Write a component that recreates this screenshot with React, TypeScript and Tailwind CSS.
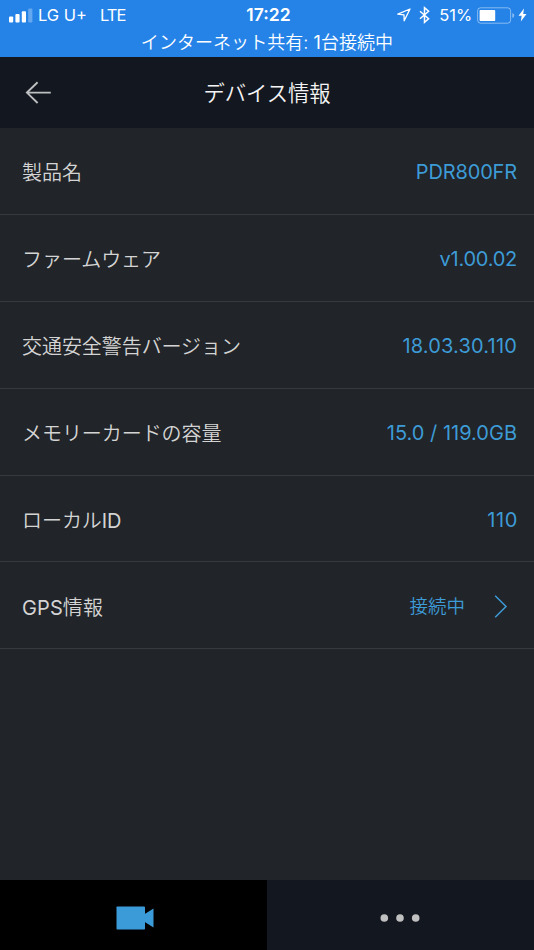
import { ReactNode } from 'react'
import { twMerge } from 'tailwind-merge'

type InfoItem = {
  id: string
  label: ReactNode
  value: string
  labelClass?: string
  valueClass?: string
  hasLink?: boolean
}

const items: InfoItem[] = [
  { id: 'product', label: '製品名', value: 'PDR800FR', valueClass: 'tracking-[-0.15px]' },
  { id: 'firmware', label: 'ファームウェア', value: 'v1.00.02', valueClass: 'tracking-[-0.25px]' },
  { id: 'safety', label: '交通安全警告バージョン', value: '18.03.30.110', valueClass: 'tracking-[0.18px]' },
  { id: 'memory', label: 'メモリーカードの容量', value: '15.0 / 119.0GB' },
  {
    id: 'local',
    label: <>ローカル<span className="font-normal">ID</span></>,
    value: '110',
    valueClass: 'tracking-[0.6px] -mr-px',
  },
  {
    id: 'gps',
    label: <><span className="font-normal">GPS</span>情報</>,
    value: '接続中',
    labelClass: 'tracking-[0.1px]',
    valueClass: 'text-[18.5px] font-[350]',
    hasLink: true,
  },
]

function StatusBar() {
  return (
    <div className="h-[57px] shrink-0 bg-[#2583e8] text-white">
      <div className="grid h-[30px] grid-cols-[1fr_auto_1fr] items-center pl-[9px] pr-[7px] text-[16.5px] leading-[30px]">
        <div className="flex items-center">
          <svg width="24" height="15" viewBox="0 0 24 15" fill="currentColor">
            <rect x="0" y="8.5" width="4.2" height="6" rx="1" />
            <rect x="6.4" y="6" width="4.2" height="8.5" rx="1" />
            <rect x="12.8" y="3.2" width="4.2" height="11.3" rx="1" />
            <rect x="19.2" y="0.5" width="4.2" height="14" rx="1" opacity="0.3" />
          </svg>
          <span className="ml-[5px]">LG U+</span>
          <span className="ml-[13px] tracking-[-1px]">LTE</span>
        </div>
        <span className="pl-px text-[17.5px] font-semibold">17:22</span>
        <div className="flex items-center justify-end">
          <svg width="14" height="14" viewBox="0 0 14 14" fill="none">
            <path
              d="M0.8 6.2 13 1 7.2 12.8 7 6.8Z"
              stroke="currentColor"
              strokeWidth="1.3"
              strokeLinejoin="round"
            />
          </svg>
          <svg className="ml-2" width="11" height="18" viewBox="0 0 11 18" fill="none">
            <path
              d="M1 5.2 9.6 12.7 5.5 16.3V1.7L9.6 5.3 1 12.8"
              stroke="currentColor"
              strokeWidth="1.5"
            />
          </svg>
          <span className="ml-[9px] tracking-[-0.1px]">51%</span>
          <svg className="ml-[5px]" width="38" height="17" viewBox="0 0 38 17" fill="none">
            <rect x="0.6" y="0.8" width="33" height="15.4" rx="3" stroke="currentColor" strokeOpacity="0.45" />
            <rect x="2.6" y="2.9" width="15.6" height="11.2" rx="0.8" fill="currentColor" />
            <path d="M35.3 6c2.6.8 2.6 4.2 0 5Z" fill="currentColor" fillOpacity="0.45" />
          </svg>
          <svg className="ml-[3px]" width="9" height="14" viewBox="0 0 9 14" fill="currentColor">
            <path d="M6 .5.5 7.8h3.2L2.8 13.5 8.5 5.9H5.2Z" />
          </svg>
        </div>
      </div>
      <p className="pt-px text-center text-[18px] font-[350] leading-[24px] tracking-[0.05px]">
        インターネット共有: <span className="font-normal">1</span>台接続中
      </p>
    </div>
  )
}

function Header({ title }: { title: string }) {
  return (
    <header className="grid h-[71px] shrink-0 grid-cols-[1fr_auto_1fr] items-center bg-[#13171f] px-6">
      <svg width="27" height="24" viewBox="0 0 27 24" fill="none">
        <path d="M13.6 1.2 2.9 11.6 13.6 22M2.9 11.6H26.8" stroke="#bdbfc1" strokeWidth="1.9" />
      </svg>
      <h1 className="pt-0.5 text-[21.3px] font-[350] text-[#f4f4f4]">{title}</h1>
    </header>
  )
}

function InfoRow({ item }: { item: InfoItem }) {
  return (
    <li className="flex h-[86.9px] items-center justify-between border-b border-[#36393e] pl-[22px] pr-[17px] pt-[3px]">
      <span
        className={twMerge(
          'pt-0.5 text-[20px] font-[350] tracking-[-0.06px] text-[#d4d4d4]',
          item.labelClass,
        )}
      >
        {item.label}
      </span>
      <span className="flex items-center text-[#3d9bd6]">
        <span className={twMerge('text-[20px]', item.valueClass)}>
          {item.value}
        </span>
        {item.hasLink && (
          <svg className="ml-[29px] mr-[9px]" width="14" height="24" viewBox="0 0 14 24" fill="none">
            <path d="M1.2 0.8 12 11.5 1.2 22.2" stroke="currentColor" strokeWidth="1.5" />
          </svg>
        )}
      </span>
    </li>
  )
}

function Tab({ active, children }: { active?: boolean; children: ReactNode }) {
  return (
    <button
      className={twMerge(
        'flex w-1/2 items-center justify-center bg-[#13171f] pr-px pt-1.5',
        active && 'bg-black pl-0.5 pr-0',
      )}
    >
      {children}
    </button>
  )
}

export default function App() {
  return (
    <div className="flex h-[950px] w-[534px] flex-col overflow-hidden bg-[#212428] font-['Inter','Noto_Sans_CJK_JP',sans-serif]">
      <StatusBar />
      <Header title="デバイス情報" />
      <ul className="flex-1">
        {items.map((item) => (
          <InfoRow key={item.id} item={item} />
        ))}
      </ul>
      <nav className="flex h-[70px] shrink-0">
        <Tab active>
          <svg width="38" height="24" viewBox="0 0 38 24" fill="#3b9bd9">
            <rect x="0.5" y="0.5" width="28.5" height="23" rx="0.8" />
            <path d="M28 8.5 37.5 2.5V21.5L28 15.5Z" />
          </svg>
        </Tab>
        <Tab>
          <svg width="40" height="8" viewBox="0 0 40 8" fill="#c0c0c0">
            <circle cx="4.3" cy="4" r="3.8" />
            <circle cx="20" cy="4" r="3.8" />
            <circle cx="35.7" cy="4" r="3.8" />
          </svg>
        </Tab>
      </nav>
    </div>
  )
}
